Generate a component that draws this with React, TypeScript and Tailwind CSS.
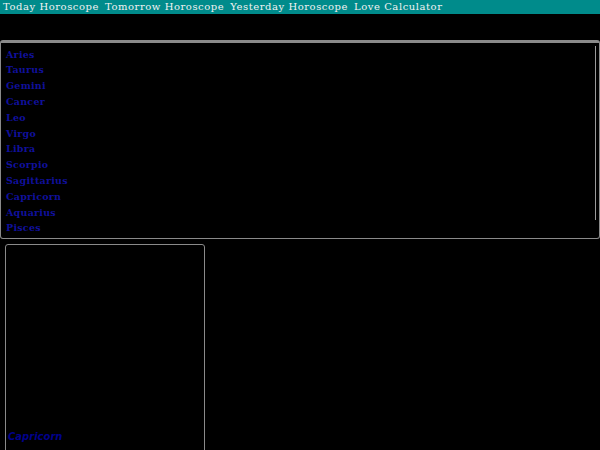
import React from "react";

const signs = [
  "Aries",
  "Taurus",
  "Gemini",
  "Cancer",
  "Leo",
  "Virgo",
  "Libra",
  "Scorpio",
  "Sagittarius",
  "Capricorn",
  "Aquarius",
  "Pisces",
];

const navLinks = [
  "Today Horoscope",
  "Tomorrow Horoscope",
  "Yesterday Horoscope",
  "Love Calculator",
];

export default function App() {
  return (
    <div className="min-h-[450px] w-[600px] overflow-hidden bg-black font-['DejaVu_Serif',serif]">
      {/* top navigation */}
      <nav className="flex h-[14px] items-center gap-[6px] bg-[#008b8b] pl-[3px] text-[10px] leading-none tracking-[0.55px] text-[#f2f2f2]">
        {navLinks.map((l) => (
          <a key={l} className="whitespace-nowrap">
            {l}
          </a>
        ))}
      </nav>

      <div className="h-[26px]" />

      {/* sign list panel */}
      <div className="relative h-[199px] rounded-[3px] border border-t-[3px] border-[#8a8a8a] pl-[5px] pt-[3.5px]">
        <ul className="flex flex-col">
          {signs.map((s) => (
            <li
              key={s}
              className="flex h-[15.8px] items-center text-[9.5px] font-bold leading-none tracking-[0.25px] text-[#10109c]"
            >
              {s}
            </li>
          ))}
        </ul>
        <div className="absolute right-[3px] top-[3px] h-[174px] w-px bg-[#9a9a9a]" />
      </div>

      {/* featured sign card */}
      <div className="ml-[5px] mt-[5px] flex h-[220px] w-[200px] flex-col justify-end rounded-[3px] border border-[#8a8a8a] px-[2px] pb-[21px]">
        <span className="font-['DejaVu_Sans',sans-serif] text-[10px] font-bold italic leading-none text-[#00008b]">
          Capricorn
        </span>
      </div>
    </div>
  );
}
